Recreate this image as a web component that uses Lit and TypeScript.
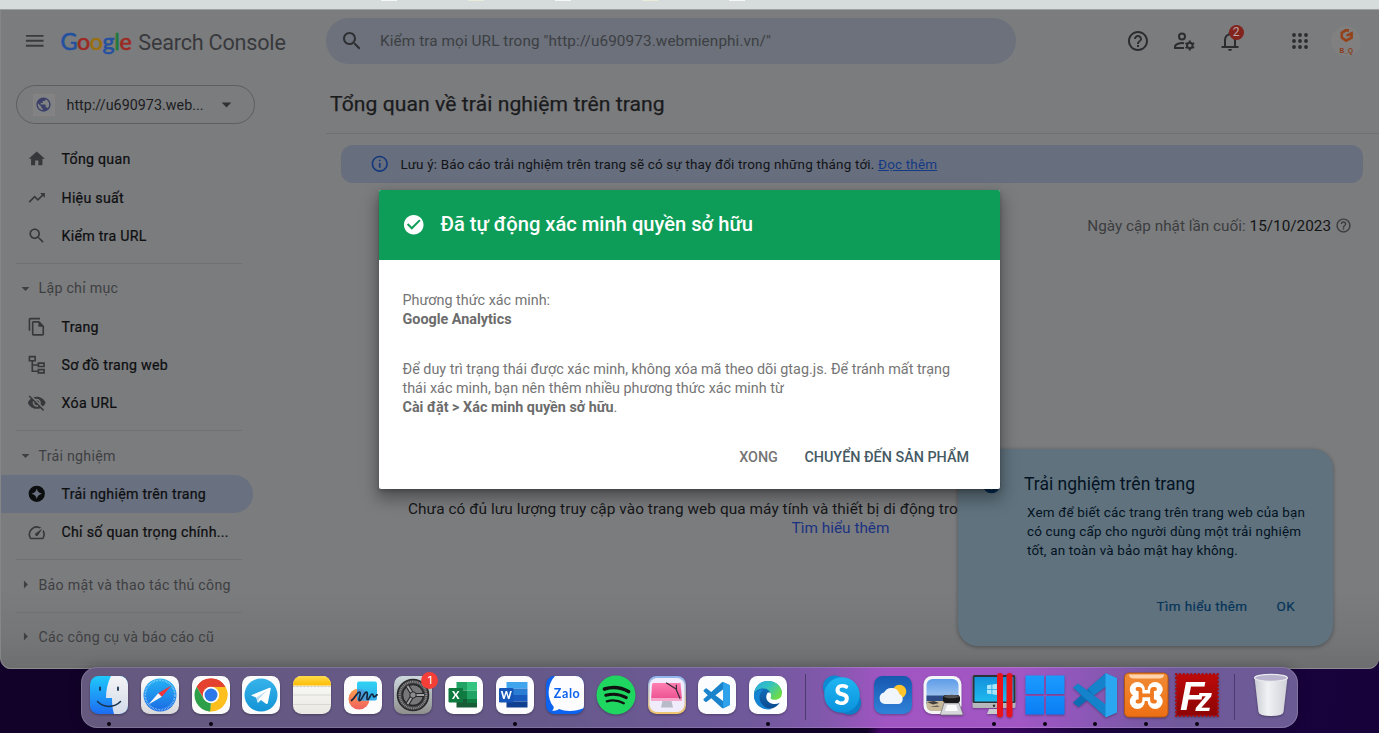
import { LitElement, html, svg, css, nothing } from "lit";
import { customElement, property } from "lit/decorators.js";

const PATHS: Record<string, string> = {
  home: "M10 20v-6h4v6h5v-8h3L12 3 2 12h3v8z",
  trend: "M16 6l2.29 2.29-4.88 4.88-4-4L2 16.59 3.41 18l6-6 4 4 6.3-6.29L22 12V6z",
  search:
    "M15.5 14h-.79l-.28-.27C15.41 12.59 16 11.11 16 9.5 16 5.91 13.09 3 9.5 3S3 5.91 3 9.5 5.91 16 9.5 16c1.61 0 3.09-.59 4.23-1.57l.27.28v.79l5 4.99L20.49 19l-4.99-5zm-6 0C7.01 14 5 11.99 5 9.5S7.01 5 9.5 5 14 7.01 14 9.5 11.99 14 9.5 14z",
  pages:
    "M16 1H4c-1.1 0-2 .9-2 2v14h2V3h12V1zm-1 4H8c-1.1 0-1.99.9-1.99 2L6 21c0 1.1.89 2 1.99 2H19c1.1 0 2-.9 2-2V11l-6-6zM8 21V7h6v5h5v9H8z",
  sitemap:
    "M2 1h9v7H7.500v3.500H13V9h9v6h-9v-1.800H7.500v6H13V17h9v6h-9v-2H5.500V8H2zM4 3v3h5V3zM15 11v2.200h5V11zM15 19v2h5v-2z",
  hidden:
    "M12 7c2.760 0 5 2.240 5 5 0 .65-.13 1.260-.36 1.830l2.920 2.920c1.510-1.260 2.700-2.890 3.430-4.750-1.730-4.390-6-7.500-11-7.500-1.400 0-2.740.25-3.980.7l2.160 2.160C10.740 7.130 11.350 7 12 7zM2 4.270l2.280 2.280.46.46C3.080 8.300 1.780 10.020 1 12c1.730 4.390 6 7.500 11 7.500 1.550 0 3.030-.3 4.380-.84l.42.42L19.730 22 21 20.730 3.270 3 2 4.270zM7.530 9.800l1.550 1.550c-.05.21-.08.43-.08.65 0 1.660 1.340 3 3 3 .22 0 .44-.03.65-.08l1.550 1.550c-.67.33-1.410.53-2.200.53-2.760 0-5-2.240-5-5 0-.79.2-1.530.53-2.200zm4.310-.78l3.150 3.150.02-.16c0-1.660-1.340-3-3-3l-.17.01z",
  experience:
    "M12 2a10 10 0 1 0 0 20 10 10 0 0 0 0-20zm0 3.500c.8 3.800 2.700 5.700 6.500 6.500-3.800.8-5.700 2.700-6.500 6.500-.8-3.800-2.700-5.700-6.500-6.500 3.800-.8 5.700-2.700 6.500-6.500z",
  speed:
    "M20.380 8.570l-1.230 1.850a8 8 0 0 1-.22 7.580H5.070A8 8 0 0 1 15.580 6.850l1.850-1.230A10 10 0 0 0 3.350 19a2 2 0 0 0 1.720 1h13.850a2 2 0 0 0 1.740-1 10 10 0 0 0-.27-10.440zm-9.790 6.840a2 2 0 0 0 2.830 0l5.660-8.490-8.490 5.660a2 2 0 0 0 0 2.830z",
  help: "M11 18h2v-2h-2v2zm1-16C6.480 2 2 6.480 2 12s4.480 10 10 10 10-4.480 10-10S17.520 2 12 2zm0 18c-4.410 0-8-3.590-8-8s3.590-8 8-8 8 3.590 8 8-3.590 8-8 8zm0-14c-2.210 0-4 1.790-4 4h2c0-1.100.9-2 2-2s2 .9 2 2c0 2-3 1.750-3 5h2c0-2.250 3-2.500 3-5 0-2.210-1.790-4-4-4z",
  info: "M11 7h2v2h-2zm0 4h2v6h-2zm1-9C6.480 2 2 6.480 2 12s4.480 10 10 10 10-4.480 10-10S17.520 2 12 2zm0 18c-4.410 0-8-3.590-8-8s3.590-8 8-8 8 3.590 8 8-3.590 8-8 8z",
  bell: "M12 22c1.100 0 2-.9 2-2h-4c0 1.100.9 2 2 2zm6-5v-6c0-3.070-1.630-5.640-4.500-6.320V4c0-.83-.67-1.500-1.500-1.500s-1.500.67-1.500 1.500v.68C7.640 5.360 6 7.920 6 11v6H3.500v2h17v-2zm-2 0H8v-6c0-2.480 1.510-4.500 4-4.500s4 2.020 4 4.500v6z",
  globe:
    "M12 2C6.480 2 2 6.480 2 12s4.480 10 10 10 10-4.480 10-10S17.520 2 12 2zm-1 17.930c-3.950-.49-7-3.850-7-7.930 0-.62.08-1.210.21-1.790L9 15v1c0 1.100.9 2 2 2v1.930zm6.900-2.540c-.26-.81-1-1.390-1.900-1.390h-1v-3c0-.55-.45-1-1-1H8v-2h2c.55 0 1-.45 1-1V7h2c1.100 0 2-.9 2-2v-.41c2.930 1.190 5 4.060 5 7.410 0 2.080-.8 3.970-2.100 5.390z",
  menu: "M3 18h18v-2H3v2zm0-5h18v-2H3v2zm0-7v2h18V6H3z",
  check:
    "M12 2C6.480 2 2 6.480 2 12s4.480 10 10 10 10-4.480 10-10S17.520 2 12 2zm-2 15l-5-5 1.410-1.410L10 14.170l7.590-7.590L19 8l-9 9z",
  down: "M7 10l5 5 5-5z",
  right: "M10 7l5 5-5 5z",
};

@customElement("ui-icon")
export class UiIcon extends LitElement {
  @property() name = "";
  @property({ type: Number }) size = 24;
  static styles = css`
    :host { display: inline-flex; flex: none; }
    svg { display: block; fill: currentColor; }
  `;
  render() {
    return html`<svg width=${this.size} height=${this.size} viewBox="0 0 24 24">
      <path fill-rule="evenodd" d=${PATHS[this.name] ?? ""}></path>
    </svg>`;
  }
}

const VSCODE =
  "M23.150 2.587L18.210.21a1.494 1.494 0 0 0-1.705.29l-9.460 8.630-4.120-3.128a.999.999 0 0 0-1.276.057L.327 7.261A1 1 0 0 0 .326 8.740L3.899 12 .326 15.260a1 1 0 0 0 .001 1.479L1.650 17.940a.999.999 0 0 0 1.276.057l4.120-3.128 9.460 8.630a1.492 1.492 0 0 0 1.704.29l4.942-2.377A1.500 1.500 0 0 0 24 20.060V3.939a1.500 1.500 0 0 0-.85-1.352zm-5.146 14.861L10.826 12l7.178-5.448v10.896z";

const grad = (id: string, a: string, b: string) => svg`
  <linearGradient id=${id} x1="0" y1="0" x2="0" y2="1">
    <stop offset="0" stop-color=${a}></stop><stop offset="1" stop-color=${b}></stop>
  </linearGradient>`;

const tile = (fill: string) => svg`<rect x="3" y="3" width="38" height="38" rx="8.500" fill=${fill}></rect>`;

const ART: Record<string, () => unknown> = {
  finder: () => svg`
    ${grad("g", "#1fc8fb", "#1d6cf2")}${grad("h", "#f3f4f6", "#d3dbe8")}
    <clipPath id="c">${tile("#000")}</clipPath>
    <g clip-path="url(#c)">
      <rect x="3" y="3" width="38" height="38" fill="url(#g)"></rect>
      <path d="M24 3C20.500 10 19 17 19 25h6c0 6 .5 11 2 16h14V3z" fill="url(#h)"></path>
    </g>
    <path d="M13 14.500v2.500M31 14.500v2.500" stroke="#17324f" stroke-width="1.800" stroke-linecap="round"></path>
    <path d="M10.500 28.500c6 6.500 17 6.500 23 0" fill="none" stroke="#17324f" stroke-width="1.500" stroke-linecap="round"></path>`,
  safari: () => svg`
    ${grad("g", "#fdfdfd", "#d9d9dc")}${grad("h", "#24b2f5", "#1b6be4")}
    ${tile("url(#g)")}
    <circle cx="22" cy="22" r="16.500" fill="url(#h)"></circle>
    <circle cx="22" cy="22" r="14.800" fill="none" stroke="#b8defc" stroke-width="1.800" stroke-dasharray=".5 1.050"></circle>
    <path d="M33.500 12.500L20.200 20.200 23.800 23.800z" fill="#f4333a"></path>
    <path d="M10.500 31.500L20.200 20.200 23.800 23.800z" fill="#f6f6f8"></path>`,
  chrome: () => svg`
    ${tile("#fbfbfb")}
    <path d="M22 22L7.700 13.750A16.500 16.500 0 0 1 36.300 13.750z" fill="#e4412f"></path>
    <path d="M22 22L36.300 13.750A16.500 16.500 0 0 1 22 38.500z" fill="#fcbf1d"></path>
    <path d="M22 13.750h14.300c1 1.700 2.200 5 2.200 8.250L28 22z" fill="#fcbf1d"></path>
    <path d="M22 13.750H36.300A16.500 16.500 0 0 0 7.700 13.750L14.800 26z" fill="#e4412f"></path>
    <path d="M29.200 26L22 38.500a16.500 16.500 0 0 1-3-.3L24 29z" fill="#fcbf1d"></path>
    <path d="M7.700 13.750L14.900 26.200 22 30.200l-1 8.300A16.500 16.500 0 0 1 7.700 13.750z" fill="#2d9f49"></path>
    <circle cx="22" cy="22" r="8.200" fill="#fff"></circle><circle cx="22" cy="22" r="6.500" fill="#2a78ea"></circle>`,
  telegram: () => svg`
    ${grad("g", "#37b3ea", "#1494d6")}
    ${tile("#fbfbfb")}<circle cx="22" cy="22" r="16.500" fill="url(#g)"></circle>
    <path d="M12 22.300L30.500 14.800q1.500-.4 1.200 1.300L28.800 30q-.5 1.500-1.900.7L22 27l-2.600 2.600q-.7.500-.9-.6L17.300 24.700z" fill="#fff"></path>
    <path d="M17.500 24.600L28 17.800 20 25.700l-1 4z" fill="#b9dcf0"></path>`,
  notes: () => svg`
    ${grad("g", "#fdfdfb", "#e9e8e2")}${grad("h", "#ffdb4a", "#fdbd04")}
    <clipPath id="c">${tile("#000")}</clipPath>
    <g clip-path="url(#c)"><rect x="3" y="3" width="38" height="38" fill="url(#g)"></rect>
      <rect x="3" y="3" width="38" height="9.500" fill="url(#h)"></rect>
      <path d="M3 13.600h38" stroke="#bbb5a0" stroke-dasharray=".7 .7"></path>
      <path d="M3 22h38M3 31.500h38" stroke="#d2d1cd" stroke-width=".8"></path></g>`,
  freeform: () => svg`
    ${grad("g", "#2fd3f3", "#35a9ea")}${grad("h", "#ffa04c", "#f0605e")}
    ${tile("#fcfcfd")}
    <circle cx="18" cy="26" r="10.500" fill="url(#h)"></circle>
    <rect x="16" y="8.500" width="20" height="19" rx="2" fill="url(#g)"></rect>
    <path d="M16 16a10.500 10.500 0 0 1 12 11.500H16z" fill="#4a9dd8"></path>
    <path d="M10.500 27.500c4-3 6-9 8-8.500 2.500.5-2 8.500 0 8.700 2.500.2 4.500-9 7-8.500s-1 6.800 1 7.300c2 .4 2.600-5.500 4.600-5.500 1.600 0 .5 3 2 2.800s2.200-1.400 3-2" fill="none" stroke="#14263c" stroke-width="1.700" stroke-linecap="round"></path>`,
  settings: () => svg`
    ${grad("g", "#cdd8dd", "#8f8f8d")}
    ${tile("url(#g)")}
    <circle cx="22" cy="22" r="15.500" fill="#444446" stroke="#29292b" stroke-width="1.600"></circle>
    <circle cx="22" cy="22" r="13.300" fill="none" stroke="#8d8d8f" stroke-width="2.200" stroke-dasharray="1 .8"></circle>
    <circle cx="22" cy="22" r="10.500" fill="#777779" stroke="#29292b" stroke-width="1.500"></circle>
    <path d="M22 22L16.500 13M22 22h11M22 22l-5.500 9" stroke="#262628" stroke-width="4.200"></path>
    <path d="M22 22L16.500 13M22 22h11M22 22l-5.500 9" stroke="#a3a3a5" stroke-width="2"></path>
    <circle cx="22" cy="22" r="3.200" fill="#8c8c8e" stroke="#262628"></circle>`,
  excel: () => svg`
    ${tile("#fcfdfc")}
    <rect x="14.500" y="9" width="10.500" height="8.500" fill="#21a366"></rect><rect x="25" y="9" width="10" height="8.500" fill="#33c481"></rect>
    <rect x="14.500" y="17.500" width="10.500" height="8.500" fill="#107c41"></rect><rect x="25" y="17.500" width="10" height="8.500" fill="#21a366"></rect>
    <rect x="14.500" y="26" width="20.500" height="8.500" fill="#185c37"></rect><rect x="25" y="26" width="10" height="4" fill="#107c41"></rect>
    <rect x="6.500" y="15" width="14.500" height="14.500" rx="1.200" fill="#0f7a40"></rect>
    <text x="13.700" y="26.200" class="glyph" font-size="11">X</text>`,
  word: () => svg`
    ${tile("#fcfcfe")}
    <rect x="13.500" y="9" width="21" height="6.500" fill="#41a5ee"></rect><rect x="13.500" y="15.500" width="21" height="6.500" fill="#2b7cd3"></rect>
    <rect x="13.500" y="22" width="21" height="6.500" fill="#185abd"></rect><rect x="13.500" y="28.500" width="21" height="6" fill="#103f91"></rect>
    <rect x="6" y="15" width="14.500" height="14.500" rx="1.200" fill="#1656b8"></rect>
    <text x="13.200" y="26" class="glyph" font-size="10.500">W</text>`,
  zalo: () => svg`
    <clipPath id="c">${tile("#000")}</clipPath>
    <g clip-path="url(#c)"><rect x="3" y="3" width="38" height="38" fill="#0b63f0"></rect>
      <path d="M12 3h29v32c-8 3.500-18 4-25 1-2 1.500-4 2-7 1.500 1.500-1 2-2.500 1.500-4C4 26 3.500 12 12 3z" fill="#fdfdff"></path></g>
    <text x="23.800" y="25" class="glyph zalo" font-size="12.500" textLength="26">Zalo</text>`,
  spotify: () => svg`
    <circle cx="22" cy="22" r="19.500" fill="#1fd661"></circle>
    <g fill="none" stroke="#111" stroke-linecap="round">
      <path d="M10.500 16c8-2.500 17-1.500 24 2.500" stroke-width="3.700"></path>
      <path d="M11.800 22.300c7-2 14.500-1 20.500 2.300" stroke-width="3"></path>
      <path d="M12.800 28.300c6-1.600 12-.8 17 2" stroke-width="2.300"></path></g>`,
  cleaner: () => svg`
    ${grad("g", "#8fb6f2", "#f2c66c")}${grad("h", "#ff7fb2", "#e94c8d")}
    ${tile("url(#g)")}<rect x="4.500" y="5" width="35" height="34" rx="7.500" fill="#f1ecfb"></rect>
    <path d="M17.500 28h9l1.500 6.500h-12z" fill="#b9bcc8"></path>
    <path d="M8.500 10h27l1.500 16q.2 2-2 2H8q-2 0-1.900-2L7 11.500q.2-1.500 1.500-1.500z" fill="url(#h)"></path>
    <path d="M6.100 25h30.800v1q0 2-2 2H8q-2 0-1.900-2z" fill="#f8a9cb"></path>
    <path d="M21.500 10l9.500 6 4 9.500M31.500 17l-.2-5" stroke="#3a2c3a" stroke-width="1.200" fill="none" stroke-linecap="round"></path>`,
  vscode: () => svg`
    ${tile("#fbfcfd")}
    <g transform="translate(8.500 9) scale(1.100)"><path d=${VSCODE} fill="#1a83cb"></path>
      <path d="M17.800.3L23.150 2.587Q24 3 24 3.939V20.060q0 .9-.85 1.350L17.800 23.700z" fill="#2ea3ec"></path></g>`,
  edge: () => svg`
    <linearGradient id="g" x1="0" y1="0" x2="1" y2=".6"><stop offset="0" stop-color="#2aa9e0"></stop><stop offset=".5" stop-color="#33c3c0"></stop><stop offset="1" stop-color="#6edb4a"></stop></linearGradient>
    ${grad("h", "#1279c9", "#0c4a8e")}
    ${tile("#fcfdfe")}
    <circle cx="22" cy="22" r="14" fill="url(#h)"></circle>
    <path d="M35 20l3 0v9.500l-4.200.2c-3.500 2-8 1.800-11-.7-3-2.500-3.300-6.500-1-9.500z" fill="#fcfdfe"></path>
    <path d="M8 21C9 12.500 15 8 22 8c8 0 14 5.500 14 12 0 4.500-3.300 6.800-7.300 6.800-3 0-4.500-.9-4-2.300 1.300-3.500-1.200-8.500-6.700-9-4.500-.4-8.500 2-10 5.500z" fill="url(#g)"></path>
    <path d="M18 16.500c-5 3-6 9-2.500 14 3 4.300 7.500 5.700 11.500 5A14 14 0 0 1 8 22c1.500-4 5.500-6 10-5.500z" fill="#1583d3"></path>`,
  skype: () => svg`
    ${grad("g", "#1fb6f2", "#0a92dd")}
    <circle cx="14.500" cy="14" r="11.500" fill="#0c8bd4"></circle><circle cx="29.500" cy="30" r="11.500" fill="#0b7fc8"></circle>
    <circle cx="22" cy="22" r="17.800" fill="url(#g)"></circle>
    <text x="22" y="32" class="glyph" font-size="28">S</text>`,
  weather: () => svg`
    ${grad("g", "#1658b0", "#2f82d8")}
    ${tile("url(#g)")}
    <circle cx="28.500" cy="18.500" r="6.800" fill="#fdc52c"></circle>
    <path d="M14 31a5.800 5.800 0 0 1-1-11.400 8.300 8.300 0 0 1 15.500 1.600A5.200 5.200 0 0 1 28 31z" fill="#f1f6fd"></path>`,
  preview: () => svg`
    ${grad("g", "#5f9ce8", "#cfe2f5")}
    <rect x="2.500" y="3" width="38" height="38" rx="8.500" fill="#f4f5f7"></rect>
    <rect x="5.500" y="6" width="32" height="32" rx="6" fill="url(#g)"></rect>
    <path d="M5.500 22.500h32V31h-32z" fill="#2c4a86"></path>
    <path d="M5.500 28h32v4q0 6-6 6h-20q-6 0-6-6z" fill="#c9b99b"></path>
    <path d="M6 29l7-1 5 2-6 1.500zM9 34l7-1.500 3 1z" fill="#433f3c"></path>
    <path d="M23 30h15l4 11q0 1-1.500 1h-20q-1.300 0-1-1z" fill="#d5d7da" stroke="#6b6d70" stroke-width=".7"></path>
    <path d="M26 32h9l2 6H24z" fill="#fafafa"></path>
    <rect x="22" y="22" width="17" height="8" rx="3" fill="#19191b"></rect><ellipse cx="30.500" cy="23.500" rx="7.500" ry="1.700" fill="#515154"></ellipse>`,
  parallels: () => svg`
    ${grad("g", "#1391dc", "#20b9ef")}${grad("h", "#dedfe2", "#b2b4b8")}
    <path d="M17 36h12l2 5H15z" fill="#c8cacd"></path>
    <rect x=".5" y="2" width="43" height="33" rx="1.500" fill="url(#h)"></rect>
    <rect x=".5" y="2" width="43" height="28" rx="1.500" fill="#2d3238"></rect>
    <rect x="2.500" y="4" width="39" height="24.500" fill="url(#g)"></rect>
    <path d="M15 12.300l4.500-.7v4.400H15zM20.300 11.500l5-.8V16h-5zM15 16.800h4.500v4.400l-4.500-.7zM20.300 16.800h5V22l-5-.7z" fill="#a8e4fc"></path>
    <circle cx="22" cy="32.700" r="1.200" fill="#333"></circle>
    <rect x="25" y="0" width="6" height="44.500" rx="3" fill="#e8141c"></rect><rect x="34.500" y="0" width="6" height="44.500" rx="3" fill="#e8141c"></rect>`,
  windows: () => svg`
    ${grad("g", "#1a9bff", "#0b7ef5")}
    <path d="M2.500 2.500h18.500v18.500h-18.500zM23 2.500h18.500v18.500H23zM2.500 23h18.500v18.500h-18.500zM23 23h18.500v18.500H23z" fill="url(#g)"></path>`,
  vscodeFlat: () => svg`
    <path d="M0 29.500L5.500 34 33 12.500V0z" fill="#0b6eb5"></path>
    <path d="M0 14.500L5 10.500 33 31.500v13z" fill="#1583cb"></path>
    <path d="M15 15.500L33 0v13.500L21 22.500z" fill="#1583cb"></path>
    <path d="M32.500 0L44 5v34.500L32.500 44.500z" fill="#2aa7f0"></path>`,
  xampp: () => svg`
    ${grad("g", "#f08b35", "#ee6f14")}
    <rect x=".5" y="0" width="43.500" height="44" rx="4.500" fill="url(#g)" stroke="#b9570f" stroke-width="1"></rect>
    <path d="M5 1.500h35q0 4-5 4H10q-5 0-5-4z" fill="#ffd3ab"></path>
    <g fill="#fff">
      <circle cx="13.300" cy="16.500" r="7.500"></circle><circle cx="31.200" cy="16.500" r="7.500"></circle>
      <circle cx="13.300" cy="28.500" r="7.500"></circle><circle cx="31.200" cy="28.500" r="7.500"></circle>
      <path d="M9 17h26.500v11H9z"></path></g>
    <g fill="none" stroke="#f07a20" stroke-linecap="round" stroke-width="3.800">
      <path d="M13.500 16h1.500q1.500 0 1.500 2v8.500q0 2-1.500 2h-1.500M31 16h-1.500q-1.500 0-1.500 2v8.500q0 2 1.500 2H31"></path>
      <path d="M17 22.300h11"></path></g>`,
  filezilla: () => svg`
    ${grad("g", "#bd0a0a", "#8c0404")}
    <rect x="1.500" y="1.500" width="41" height="41" fill="url(#g)"></rect>
    <rect x="1.200" y="1.200" width="41.600" height="41.600" fill="none" stroke="#ae0808" stroke-width="2.400" stroke-dasharray="0 3.780" stroke-linecap="round"></rect>
    <text x="5" y="36.500" class="filezilla"><tspan font-size="40">F</tspan><tspan font-size="33" dx="-9" dy="1.500">z</tspan></text>`,
  trash: () => svg`
    <linearGradient id="g"><stop offset="0" stop-color="#c9ccd3"></stop><stop offset=".4" stop-color="#f1f2f4"></stop><stop offset="1" stop-color="#cfd1d8"></stop></linearGradient>
    <path d="M5.500 4.500h33L34.500 39q-.5 4-12.500 4T9.500 39z" fill="url(#g)"></path>
    <ellipse cx="22" cy="4.800" rx="16.500" ry="3.500" fill="#b9b3cd" stroke="#e9e9ef" stroke-width="1.200"></ellipse>`,
};

@customElement("dock-app")
export class DockApp extends LitElement {
  @property() name = "";
  @property({ type: Boolean }) running = false;
  @property() badge = "";
  static styles = css`
    :host { display: flex; flex-direction: column; align-items: center; width: 50.68px; flex: none; position: relative; padding-top: 6px; box-sizing: border-box; }
    svg { display: block; overflow: visible; filter: drop-shadow(0 1px 1px rgba(0, 0, 0, .3)); }
    .glyph { font-family: Lato, sans-serif; font-weight: 900; fill: #fff; text-anchor: middle; }
    .zalo { font-weight: 700; fill: #0d62ee; }
    .filezilla { font: italic bold 40px "Liberation Sans", sans-serif; fill: #fff; }
    .dot { width: 4px; height: 4px; border-radius: 50%; background: #08030f; margin-top: 5px; }
    .badge { position: absolute; left: 33.500px; top: 5px; width: 17px; height: 17px; border-radius: 50%; background: #f33f38; color: #fff; font: 11px/17px Inter, sans-serif; text-align: center; }
  `;
  render() {
    return html`<svg width="44" height="44" viewBox="0 0 44 44">${ART[this.name]?.()}</svg>
      ${this.running ? html`<span class="dot"></span>` : nothing}
      ${this.badge ? html`<span class="badge">${this.badge}</span>` : nothing}`;
  }
}

interface NavItem { icon: string; label: string; active?: boolean; }
interface NavGroup { title?: string; open?: boolean; items: NavItem[]; }

const NAV: NavGroup[] = [
  { items: [
    { icon: "home", label: "Tổng quan" },
    { icon: "trend", label: "Hiệu suất" },
    { icon: "search", label: "Kiểm tra URL" },
  ] },
  { title: "Lập chỉ mục", open: true, items: [
    { icon: "pages", label: "Trang" },
    { icon: "sitemap", label: "Sơ đồ trang web" },
    { icon: "hidden", label: "Xóa URL" },
  ] },
  { title: "Trải nghiệm", open: true, items: [
    { icon: "experience", label: "Trải nghiệm trên trang", active: true },
    { icon: "speed", label: "Chỉ số quan trọng chính..." },
  ] },
  { title: "Bảo mật và thao tác thủ công", items: [] },
  { title: "Các công cụ và báo cáo cũ", items: [] },
];

const DOCK: { name: string; running?: boolean; badge?: string }[][] = [
  [
    { name: "finder", running: true }, { name: "safari" }, { name: "chrome", running: true }, { name: "telegram" },
    { name: "notes" }, { name: "freeform" }, { name: "settings", badge: "1" }, { name: "excel" },
    { name: "word", running: true }, { name: "zalo" }, { name: "spotify" }, { name: "cleaner" },
    { name: "vscode" }, { name: "edge", running: true },
  ],
  [
    { name: "skype" }, { name: "weather" }, { name: "preview" }, { name: "parallels", running: true },
    { name: "windows", running: true }, { name: "vscodeFlat", running: true }, { name: "xampp", running: true },
    { name: "filezilla", running: true },
  ],
  [{ name: "trash" }],
];

@customElement("app-root")
export class AppRoot extends LitElement {
  static styles = css`
    :host { display: block; width: 1384px; height: 736px; background: #fff; overflow: hidden; font-family: Roboto, sans-serif; }
    * { box-sizing: border-box; }
    .desktop { position: relative; width: 1379px; height: 733px; overflow: hidden; background: linear-gradient(95deg, #12022a 0 64.500%, #4a0672 65.500%, #3d0566 74%, #1b0340 80%, #17023a); }
    .strip { height: 10px; background: #d6dbdb; border-bottom: 1px solid #9da1a1; display: flex; padding-left: 381px; gap: 71px; }
    .strip i { width: 16px; height: 1px; background: #f4f7f5; }
    .strip i:nth-child(even) { background: #e8ecd8; }
    .window { height: 658.500px; border-radius: 0 0 11px 11px; overflow: hidden; background: linear-gradient(#7b7c7e 0 88%, #747577 96%, #6c6d6f); border-left: 1px solid #858688; box-shadow: inset 0 -1px #8b8b8d; display: grid; grid-template-columns: 325px 1fr; grid-template-rows: 62px 1fr; }
    .brand { display: flex; align-items: center; padding-left: 22px; }
    .brand ui-icon { color: #3a3b3e; }
    .logo { display: flex; align-items: baseline; margin-left: 14px; padding-top: 2px; }
    .google { font: 23.300px/28px Lato, sans-serif; -webkit-text-stroke: .6px; letter-spacing: -.4px; }
    .b { color: #2450a0; } .r { color: #9c2a22; } .y { color: #9a700c; } .g { color: #1f7a3a; }
    .product { font-size: 21.600px; line-height: 28px; margin-left: 7px; letter-spacing: -.2px; color: #38393c; }
    .topbar { display: flex; align-items: center; }
    .search { width: 690px; height: 46px; border-radius: 23px; background: #6c717b; display: flex; align-items: center; padding-left: 14px; gap: 16px; font-size: 15.300px; letter-spacing: .1px; color: #3c3f43; }
    .search ui-icon { color: #2e3034; }
    .tools { display: flex; align-items: center; color: #2c2d30; }
    .tools > * { flex: none; }
    .tools > ui-icon:first-child { margin-left: 109.500px; }
    .users { margin-left: 22px; }
    .bell { position: relative; margin-left: 22px; display: flex; }
    .count { position: absolute; left: 11px; top: -4.500px; width: 15px; height: 15px; border-radius: 50%; background: #83231e; color: #b9a5a4; font-size: 12px; line-height: 15.500px; text-align: center; }
    .apps { margin-left: 46.500px; }
    .avatar { margin-left: 19px; width: 30px; height: 30px; border-radius: 50%; background: #808080; }
    .avatar text { font: bold 6.500px "Liberation Sans", sans-serif; fill: #8a3a16; }
    .side { padding-top: 13px; }
    .property { width: 239px; height: 39px; margin-left: 14.500px; border: 1px solid #5d5e60; border-radius: 20px; display: flex; align-items: center; padding: 0 16px; font-size: 14.300px; letter-spacing: .03px; color: #1c1d1f; }
    .site { width: 22px; height: 22px; border: 1px solid #888380; display: flex; align-items: center; justify-content: center; color: #3c4068; margin-right: 12px; background: #818284; }
    .property > ui-icon { margin-left: auto; color: #2f3033; }
    .group { padding-top: 5px; }
    .property + .group { padding-top: 16px; }
    .rule { height: 1px; width: 226px; margin: 8px 0 0 14.500px; background: #707173; }
    .head, .item { height: 38.350px; display: flex; align-items: center; font-size: 14.200px; letter-spacing: .27px; }
    .head { padding-left: 14.500px; gap: 4px; color: #3e3f42; }
    .item { width: 252px; padding-left: 26px; gap: 15px; color: #0e0f11; -webkit-text-stroke: .22px; border-radius: 0 20px 20px 0; }
    .item ui-icon { color: #37383b; -webkit-text-stroke: 0; }
    .item.active { background: #69707f; }
    .item.active ui-icon { color: #0c0d0f; }
    .main { position: relative; }
    h1 { margin: 0; height: 62px; padding: 0 0 0 4px; line-height: 64px; font-size: 21.100px; letter-spacing: .08px; font-weight: 400; color: #1a1b1d; -webkit-text-stroke: .25px; border-bottom: 1px solid #6f7072; }
    .notice { margin: 11px 16px 0 15px; height: 38px; border-radius: 12px; background: #676e7d; display: flex; align-items: center; padding-left: 28.500px; font-size: 13.440px; letter-spacing: .18px; color: #121418; }
    .notice ui-icon { color: #14387c; margin-right: 11.500px; }
    .notice a { color: #153a85; text-decoration: underline; margin-left: 3.500px; }
    .updated { margin: 32px 27px 0 0; display: flex; justify-content: flex-end; align-items: center; height: 21px; font-size: 15.300px; color: #3b3c3f; }
    .updated b { font-weight: 400; color: #131416; margin: 0 4px; }
    .empty { margin: 264px 0 0 82px; width: 865px; font-size: 15.360px; line-height: 19.200px; color: #151618; text-align: center; white-space: nowrap; }
    .empty p { margin: 0; text-align: left; letter-spacing: .07px; }
    .empty a { color: #1b3282; }
    .coach { position: absolute; left: 632px; top: 377px; width: 374.500px; height: 196.500px; border-radius: 20px; background: #5f727e; box-shadow: 0 1px 4px rgba(0, 0, 0, .35); color: #041222; }
    .coach ui-icon { position: absolute; left: 22.500px; top: 25px; color: #052a50; }
    .coach h2 { margin: 23px 0 0 66px; font-weight: 400; font-size: 17.500px; line-height: 24px; }
    .coach p { margin: 7px 0 0 69px; width: 290px; font-size: 13.440px; letter-spacing: .18px; line-height: 19.200px; white-space: pre; }
    .coach footer { display: flex; justify-content: flex-end; gap: 29px; padding: 36px 37.500px 0 0; font-size: 13.440px; letter-spacing: .4px; line-height: 20px; color: #063459; -webkit-text-stroke: .2px; }
    .dialog { position: absolute; left: 379px; top: 189.500px; width: 620.500px; height: 299.500px; border-radius: 2px; background: #fff; color: #757575; font-size: 14.360px; line-height: 19.200px; box-shadow: 0 8px 16px 2px rgba(0, 0, 0, .34), 0 2px 4px rgba(0, 0, 0, .2); }
    .dialog header { height: 70px; border-radius: 2px 2px 0 0; background: #0d9d58; color: #fff; display: flex; align-items: center; padding-left: 23px; gap: 15px; font-size: 20.150px; font-weight: 500; }
    .dialog section { padding: 31.300px 20px 0 23.500px; height: 179.300px; }
    .dialog p { margin: 0 0 30.500px; white-space: nowrap; }
    .dialog strong { font-weight: 700; color: #6c6c6c; }
    .dialog footer { display: flex; justify-content: flex-end; gap: 26.500px; padding: 9px 30.500px 0 0; font-weight: 500; }
    .go { color: #455a64; }
    .dock { position: absolute; left: 81px; top: 667px; width: 1217px; height: 61px; border-radius: 16px; display: flex; padding-left: 2.900px; background: linear-gradient(90deg, #65597f 0, #66598a 38%, #70599b 55%, #8158ab 61%, #a055c2 66%, #a156c4 77%, #8e57b9 82%, #70599b 90%, #6b5b93); box-shadow: inset 0 0 0 1px rgba(255, 255, 255, .16), 0 0 12px rgba(0, 0, 0, .25); }
    .sep { width: 1px; margin: 7px 11px 8px 11.500px; background: #4b3a70; flex: none; }
  `;

  private group(g: NavGroup, first: boolean) {
    return html`${first ? nothing : html`<div class="rule"></div>`}
      <div class="group">
        ${g.title
          ? html`<div class="head"><ui-icon name=${g.open ? "down" : "right"} .size=${19}></ui-icon><span>${g.title}</span></div>`
          : nothing}
        ${g.items.map((i) => html`<div class="item ${i.active ? "active" : ""}">
          <ui-icon name=${i.icon} .size=${19.500}></ui-icon><span>${i.label}</span></div>`)}
      </div>`;
  }

  render() {
    const dots = [6, 12, 18];
    return html`<div class="desktop">
      <div class="strip"><i></i><i></i><i></i><i></i><i></i></div>
      <div class="window">
        <div class="brand">
          <ui-icon name="menu" .size=${23.500}></ui-icon>
          <div class="logo">
            <span class="google"><span class="b">G</span><span class="r">o</span><span class="y">o</span><span class="b">g</span><span class="g">l</span><span class="r">e</span></span>
            <span class="product">Search Console</span>
          </div>
        </div>
        <div class="topbar">
          <div class="search"><ui-icon name="search" .size=${24}></ui-icon><span>Kiểm tra mọi URL trong "http://u690973.webmienphi.vn/"</span></div>
          <div class="tools">
            <ui-icon name="help" .size=${24}></ui-icon>
            <svg class="users" width="24" height="24" viewBox="0 0 24 24" fill="none" stroke="currentColor" stroke-width="2">
              <circle cx="10" cy="7.500" r="3"></circle>
              <path d="M12 14.200c-4-.6-9 1-9 3.500V19h9"></path>
              <circle cx="17.800" cy="16.500" r="2.800"></circle>
              <path d="M17.800 11.500v2M17.800 19.500v2M13.500 14l1.700 1M20.400 18l1.700 1M13.500 19l1.700-1M20.400 15l1.700-1"></path>
            </svg>
            <span class="bell"><ui-icon name="bell" .size=${24}></ui-icon><span class="count">2</span></span>
            <svg class="apps" width="24" height="24" viewBox="0 0 24 24" fill="currentColor">
              ${dots.map((y) => dots.map((x) => svg`<circle cx=${x} cy=${y} r="1.900"></circle>`))}
            </svg>
            <svg class="avatar" viewBox="0 0 30 30">
              <path d="M18 4.400H14.500L10.800 6.800V11.500L15 14.600 20.600 11.600V7.200L15.500 9.600" fill="none" stroke="#94421a" stroke-width="2.600"></path>
              <text x="8.500" y="26.800" textLength="13.500">B_Q</text>
            </svg>
          </div>
        </div>
        <nav class="side">
          <div class="property">
            <span class="site"><ui-icon name="globe" .size=${17}></ui-icon></span>
            <span>http://u690973.web...</span>
            <ui-icon name="down" .size=${23}></ui-icon>
          </div>
          ${NAV.map((g, i) => this.group(g, i === 0))}
          <div class="rule"></div>
        </nav>
        <main class="main">
          <h1>Tổng quan về trải nghiệm trên trang</h1>
          <div class="notice"><ui-icon name="info" .size=${19.500}></ui-icon><span>Lưu ý: Báo cáo trải nghiệm trên trang sẽ có sự thay đổi trong những tháng tới.</span><a>Đọc thêm</a></div>
          <div class="updated"><span>Ngày cập nhật lần cuối:</span><b>15/10/2023</b><ui-icon name="help" .size=${17}></ui-icon></div>
          <div class="empty"><p>Chưa có đủ lưu lượng truy cập vào trang web qua máy tính và thiết bị di động tro</p><a>Tìm hiểu thêm</a></div>
          <aside class="coach">
            <ui-icon name="experience" .size=${21}></ui-icon>
            <h2>Trải nghiệm trên trang</h2>
            <p>Xem để biết các trang trên trang web của bạn
có cung cấp cho người dùng một trải nghiệm
tốt, an toàn và bảo mật hay không.</p>
            <footer><span>Tìm hiểu thêm</span><span>OK</span></footer>
          </aside>
        </main>
      </div>
      <div class="dialog" role="dialog">
        <header><ui-icon name="check" .size=${23.500}></ui-icon><span>Đã tự động xác minh quyền sở hữu</span></header>
        <section>
          <p>Phương thức xác minh:<br /><strong>Google Analytics</strong></p>
          <p>Để duy trì trạng thái được xác minh, không xóa mã theo dõi gtag.js. Để tránh mất trạng<br />thái xác minh, bạn nên thêm nhiều phương thức xác minh từ<br /><strong>Cài đặt &gt; Xác minh quyền sở hữu</strong>.</p>
        </section>
        <footer><span>XONG</span><span class="go">CHUYỂN ĐẾN SẢN PHẨM</span></footer>
      </div>
      <div class="dock">
        ${DOCK.map((apps, i) => html`${i ? html`<span class="sep"></span>` : nothing}${apps.map(
          (a) => html`<dock-app name=${a.name} ?running=${a.running} badge=${a.badge ?? ""}></dock-app>`)}`)}
      </div>
    </div>`;
  }
}
